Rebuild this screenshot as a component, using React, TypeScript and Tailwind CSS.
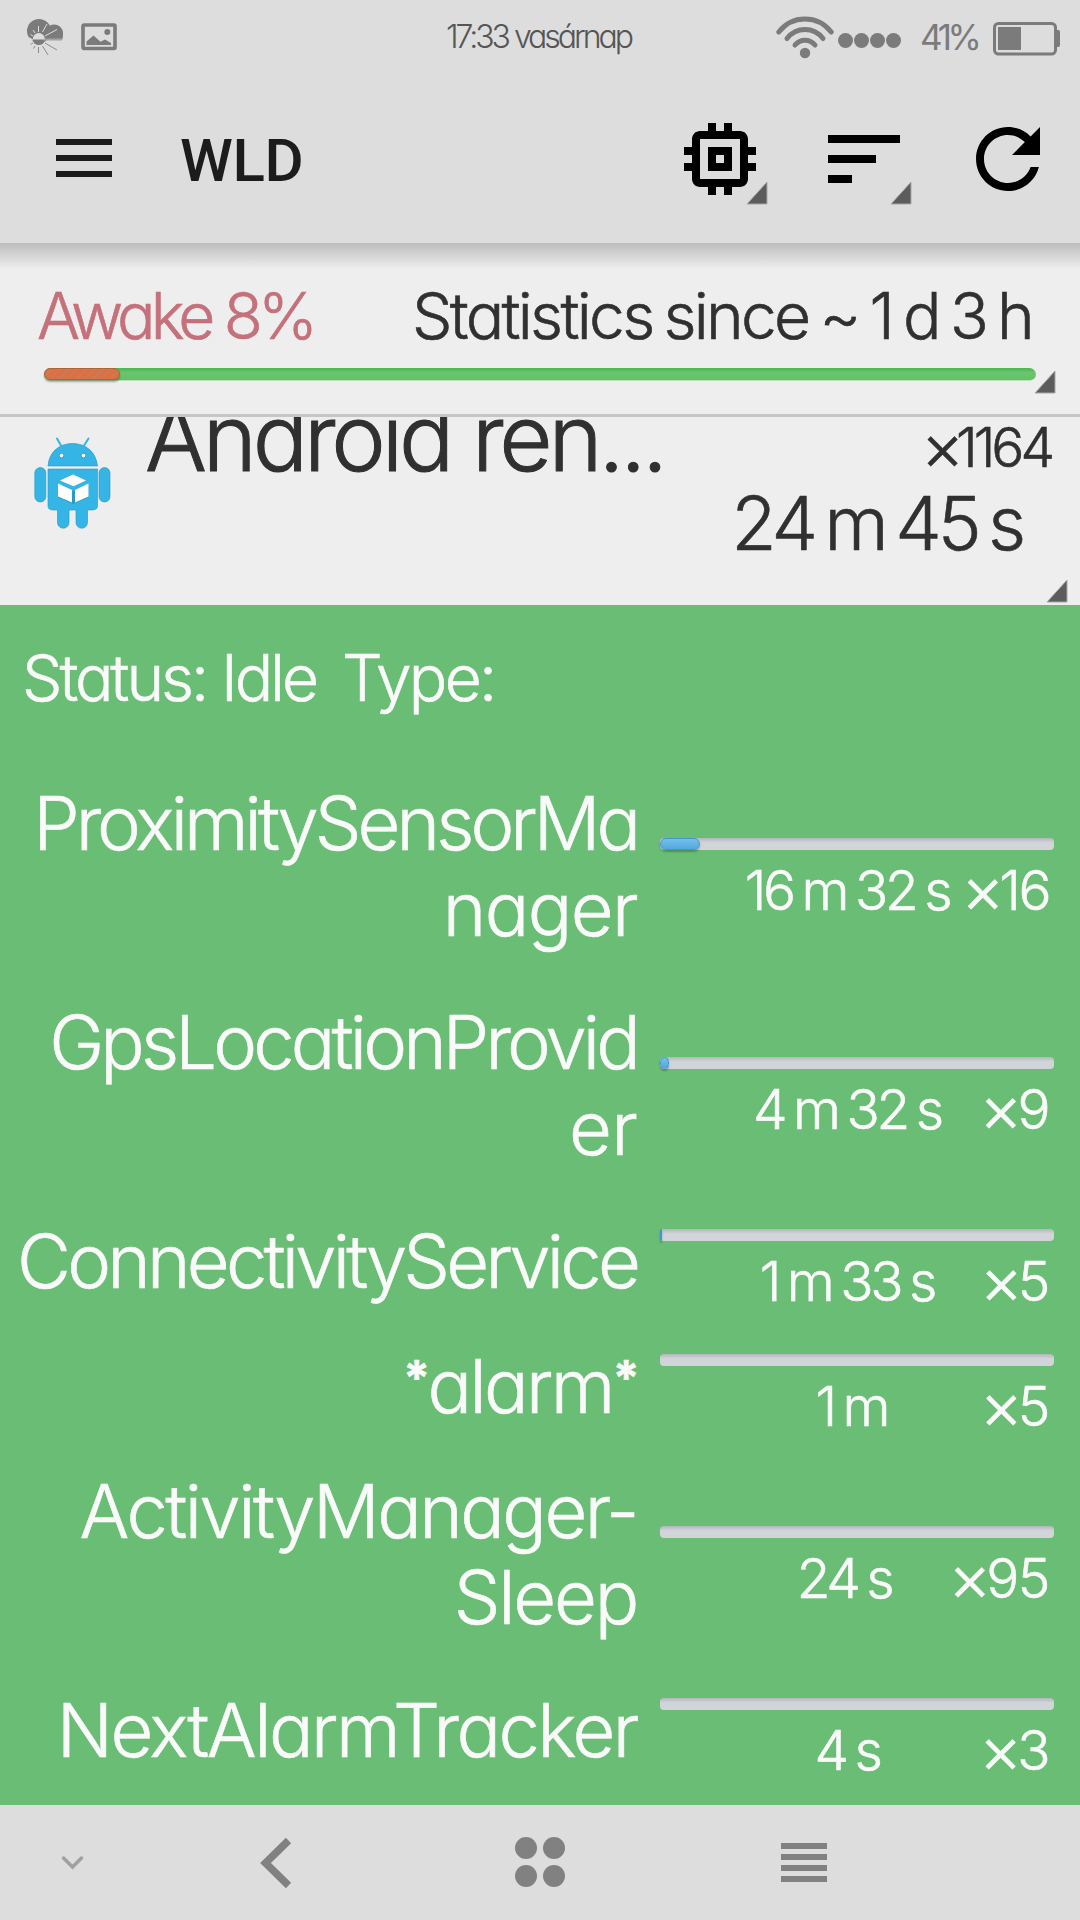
import React from 'react';

type Wakelock = {
  lines: { text: string; tracking: string; stars?: boolean }[];
  time: string;
  timeShift?: string;
  count: string;
  countTracking: string;
  fill: number;
};

const wakelocks: Wakelock[] = [
  {
    lines: [
      { text: 'ProximitySensorMa', tracking: 'tracking-[-3.95px]' },
      { text: 'nager', tracking: 'tracking-[-1.6px]' },
    ],
    time: '16 m 32 s',
    count: '16',
    countTracking: 'tracking-[-2.5px]',
    fill: 40,
  },
  {
    lines: [
      { text: 'GpsLocationProvid', tracking: 'tracking-[-3.85px]' },
      { text: 'er', tracking: 'tracking-[-0.8px]' },
    ],
    time: '4 m 32 s',
    count: '9',
    countTracking: 'tracking-[-1.5px]',
    fill: 9,
  },
  {
    lines: [{ text: 'ConnectivityService', tracking: 'tracking-[-3.78px]' }],
    time: '1 m 33 s',
    count: '5',
    countTracking: 'tracking-[-1.5px]',
    fill: 2,
  },
  {
    lines: [{ text: 'alarm', tracking: 'tracking-[-2.6px]', stars: true }],
    time: '1 m',
    timeShift: 'pl-[9px]',
    count: '5',
    countTracking: 'tracking-[-1.5px]',
    fill: 0,
  },
  {
    lines: [
      { text: 'ActivityManager-', tracking: 'tracking-[-2.5px]' },
      { text: 'Sleep', tracking: 'tracking-[-2.2px]' },
    ],
    time: '24 s',
    count: '95',
    countTracking: 'tracking-[-1.5px]',
    fill: 0,
  },
  {
    lines: [{ text: 'NextAlarmTracker', tracking: 'tracking-[-2.45px]' }],
    time: '4 s',
    count: '3',
    countTracking: 'tracking-[-1.5px]',
    fill: 0,
  },
];

function Corner({ className = '' }: { className?: string }) {
  return (
    <svg className={`absolute h-6 w-[22px] ${className}`} viewBox="0 0 22 24">
      <path d="M21 1V23H1Z" fill="#5c5c5c" stroke="#a8a8a8" strokeWidth="1" />
    </svg>
  );
}

function WeatherIcon() {
  return (
    <svg className="h-[37px] w-9" viewBox="0 0 36 37">
      <g fill="#7b7b7b">
        <circle cx="12" cy="12" r="12" />
        <path d="M14 21V13L20 9A9 9 0 0 1 36 16Q36 19 35 21Z" />
      </g>
      <rect x="15" y="19.5" width="20" height="2" fill="#a3a3a3" />
      <circle cx="11.8" cy="20" r="6" fill="#dddddd" />
      <path d="M0 17L6 20.500L4 26H0Z" fill="#dddddd" />
      <path d="M5.8 20.5H17.8A6 5.5 0 0 1 5.8 20.5Z" fill="#7b7b7b" />
      <path d="M11.5 13V7M15.5 13L20 5M18 17L30 10.500M8 14L6 11M6 17L3.500 15.500" stroke="#dddddd" strokeWidth="1" />
      <path d="M11.5 28V34M15.500 27L21 36M18 24L30 31M8 27L6.500 29.500M6 24L3.500 25.500" stroke="#8c8c8c" strokeWidth="1" />
    </svg>
  );
}

function PictureIcon() {
  return (
    <svg className="h-7 w-9" viewBox="0 0 36 28">
      <rect x="2" y="2" width="32" height="23.500" rx="1" fill="none" stroke="#7b7b7b" strokeWidth="3.600" />
      <circle cx="26.300" cy="9" r="3" fill="#7b7b7b" />
      <path d="M5.500 22V18.500L12.500 12.500L19.500 18.800L24 16.500L30 20V22Z" fill="#7b7b7b" />
    </svg>
  );
}

function StatusBar() {
  return (
    <header className="flex h-[74px] items-center text-[#7b7b7b]">
      <div className="flex w-[360px] items-center gap-[18px] pl-[27px]">
        <WeatherIcon />
        <PictureIcon />
      </div>
      <div className="w-[360px] whitespace-nowrap pr-[3px] text-center text-[32px] leading-[74px] tracking-[-3.03px] text-[#555555]">
        17:33 vasárnap
      </div>
      <div className="flex w-[360px] items-center pl-[56px]">
        <svg className="h-[43px] w-[58px]" viewBox="0 0 58 43">
          <g fill="none" stroke="#7b7b7b" strokeWidth="5" strokeLinecap="round">
            <path d="M2.800 16Q13 3 29 3T55.200 16" />
            <path d="M11 22.500Q18 13.500 29 13.500T47 22.500" />
            <path d="M19 29Q23 24.200 29 24.200T39 29" />
          </g>
          <circle cx="29" cy="37" r="5.200" fill="#7b7b7b" />
        </svg>
        <div className="ml-1 mt-[6px] flex">
          {[0, 1, 2, 3].map((i) => (
            <span key={i} className="mr-px size-[15px] rounded-full bg-[#7b7b7b]" />
          ))}
        </div>
        <span className="ml-[18px] w-[55px] whitespace-nowrap text-[35px] font-normal leading-[74px] tracking-[-4.3px]">41%</span>
        <svg className="ml-[18px] mt-[3px] h-[34px] w-[68px]" viewBox="0 0 68 34">
          <rect x="1.500" y="1.500" width="61" height="30.500" rx="4" fill="none" stroke="#7b7b7b" strokeWidth="3" />
          <rect x="5" y="5" width="23" height="23" fill="#7b7b7b" />
          <path d="M63 8H65.500Q67 8 67 10V23Q67 25 65.500 25H63Z" fill="#7b7b7b" />
        </svg>
      </div>
    </header>
  );
}

function Toolbar() {
  return (
    <div className="flex h-[169px] items-center">
      <div className="mb-[2px] ml-14 flex w-14 flex-col gap-[10px]">
        <span className="h-[6px] bg-[#1c1c1c]" />
        <span className="h-[6px] bg-[#1c1c1c]" />
        <span className="h-[6px] bg-[#1c1c1c]" />
      </div>
      <h1 className="ml-[68px] pt-[5px] font-[Roboto,sans-serif] text-[60px] font-medium leading-[60px] tracking-[-0.4px] text-[#1c1c1c]">
        WLD
      </h1>
      <div className="ml-auto mr-6 flex gap-12">
        <div className="relative">
          <svg className="size-24" viewBox="0 0 24 24">
            <path d="M15 9H9v6h6V9zm-2 4h-2v-2h2v2zm8-2V9h-2V7c0-1.100-.9-2-2-2h-2V3h-2v2h-2V3H9v2H7c-1.100 0-2 .9-2 2v2H3v2h2v2H3v2h2v2c0 1.100.9 2 2 2h2v2h2v-2h2v2h2v-2h2c1.100 0 2-.9 2-2v-2h2v-2h-2v-2h2zm-4 6H7V7h10v10z" />
          </svg>
          <Corner className="bottom-[2px] right-0" />
        </div>
        <div className="relative">
          <svg className="size-24" viewBox="0 0 24 24">
            <path d="M3 18h6v-2H3v2zM3 6v2h18V6H3zm0 7h12v-2H3v2z" />
          </svg>
          <Corner className="bottom-[2px] right-0" />
        </div>
        <svg className="size-24" viewBox="0 0 24 24">
          <path d="M17.650 6.350C16.200 4.900 14.210 4 12 4c-4.420 0-7.990 3.580-7.990 8s3.570 8 7.990 8c3.730 0 6.840-2.550 7.730-6h-2.080c-.82 2.330-3.040 4-5.650 4-3.310 0-6-2.690-6-6s2.690-6 6-6c1.660 0 3.140.69 4.220 1.780L13 11h7V4l-2.350 2.350z" />
        </svg>
      </div>
    </div>
  );
}

function Summary() {
  return (
    <section className="relative h-[174px] border-b-[3px] border-[#c6c6c6] bg-gradient-to-b from-[#bdbdbd] via-[#eeeeee] via-[26px] to-[#eeeeee] pt-[43px]">
      <div className="flex justify-between whitespace-nowrap pl-[37px] pr-[48px] text-[64px] leading-[60px]">
        <span className="tracking-[-4.84px] text-[#c4717b]">Awake 8%</span>
        <span className="tracking-[-2.7px] [word-spacing:-4.3px]">Statistics since ~ 1 d 3 h</span>
      </div>
      <div className="ml-11 mt-[22px] h-[13px] w-[992px] rounded-full border-b border-[#b9dfb9] bg-gradient-to-b from-[#4cb64e] via-[#69c56f] via-40% to-[#66c068]">
        <div className="h-3 w-[76px] rounded-full border-[1.5px] border-[#b0623a] bg-[repeating-linear-gradient(135deg,#dc7040_0px,#dc7040_4px,#c67c5c_4px,#c67c5c_6px)] shadow-[0_2px_2px_rgba(0,0,0,0.3)]" />
      </div>
      <Corner className="right-6 top-[127px]" />
    </section>
  );
}

function AndroidIcon() {
  return (
    <svg className="h-[94px] w-[78px]" viewBox="0 0 78 94">
      <g fill="#35b5e5" stroke="#2593bf" strokeWidth="0.600">
        <path d="M14 29C15 15 25 6.500 38.500 6.500S62 15 63.500 29Z" />
        <path d="M14 32H63.500V69Q63.500 73 58 73H53.500V85.500A5.500 5.500 0 0 1 42 85.500V73H35V85.500A5.500 5.500 0 0 1 23.500 85.500V73H19Q14 73 14 69Z" />
        <rect x="0.800" y="30.500" width="11" height="34.500" rx="5.500" />
        <rect x="65" y="30.500" width="11" height="34.500" rx="5.500" />
      </g>
      <path d="M23 1.500L27 8.500M54.500 1.500L50 8.500" stroke="#35b5e5" strokeWidth="2" strokeLinecap="round" />
      <circle cx="27.500" cy="18.500" r="2.300" fill="#f5f5f5" stroke="#258db8" strokeWidth="0.700" />
      <circle cx="49.500" cy="18.500" r="2.300" fill="#f5f5f5" stroke="#258db8" strokeWidth="0.700" />
      <path d="M24 48L39 54L54.500 48V60.500L39 67L24 60.500Z" fill="#207fa6" opacity="0.500" />
      <path d="M39 37.500L52 43.500L39.500 49.200L26 43.500Z" fill="#fff" />
      <path d="M24 46.500L38 53V65.500L24 59.500Z" fill="#fff" />
      <path d="M54.500 46.500L41 53V65.500L54.500 59.500Z" fill="#fff" />
    </svg>
  );
}

function AppRow() {
  return (
    <section className="relative flex h-[188px] overflow-hidden bg-[#eeeeee]">
      <div className="pl-[34px] pt-5">
        <AndroidIcon />
      </div>
      <div className="-mt-[25px] ml-[33px] whitespace-nowrap text-[92px] leading-[92px] tracking-[-4.17px] [-webkit-text-stroke:1px_currentColor]">
        Android ren...
      </div>
      <div className="ml-auto flex flex-col items-end whitespace-nowrap">
        <span className="mr-[29px] h-[60px] text-[55px] leading-[60px] tracking-[-4px]">
          <span className="relative top-[3px] text-[66px] leading-[0px] tracking-[-8px]">×</span>1164
        </span>
        <span className="mr-[58px] mt-[6px] text-[74px] leading-[80px] tracking-[-4.2px] [word-spacing:-6px]">24 m 45 s</span>
      </div>
      <Corner className="bottom-[2px] right-3" />
    </section>
  );
}

function Star() {
  return <span className="relative -top-[18px] text-[48px] font-bold leading-none">*</span>;
}

function WakelockRow({ item }: { item: Wakelock }) {
  return (
    <div className={`flex ${item.lines.length === 2 ? 'h-[219px]' : 'h-[125px]'}`}>
      <div className="w-[637px] pt-[18px] text-right text-[74px] leading-[86px]">
        {item.lines.map((line) => (
          <div key={line.text} className={`whitespace-nowrap ${line.tracking}`}>
            {line.stars && <Star />}
            {line.text}
            {line.stars && <Star />}
          </div>
        ))}
      </div>
      <div className="ml-[23px] h-[67px] w-[394px] self-center">
        <div className="h-3 rounded-[4px] bg-gradient-to-b from-[#b3b6bb] via-[#d1d5da] via-40% to-[#d1d5da]">
          {item.fill > 0 && (
            <div
              className="h-3 rounded-full border border-[#4198d0] bg-gradient-to-b from-[#76bfe8] to-[#4fa9dd] shadow-[0_2px_2px_rgba(0,0,0,0.25)]"
              style={{ width: item.fill }}
            />
          )}
        </div>
        <div className="mt-[10px] flex whitespace-nowrap pl-[80px] pr-[5px] text-[55px] leading-[60px]">
          <span className={`flex w-[214px] justify-center tracking-[-3.2px] [word-spacing:-3.7px] ${item.timeShift ?? ''}`}>
            {item.time}
          </span>
          <span className={`flex-1 text-right ${item.countTracking}`}>
            <span className="relative top-[3px] text-[66px] leading-[0px] tracking-[-5px]">×</span>
            {item.count}
          </span>
        </div>
      </div>
    </div>
  );
}

function NavBar() {
  return (
    <nav className="flex h-[115px] shrink-0 items-center bg-[#dddddd]">
      <svg className="ml-[61px] h-4 w-[23px]" viewBox="0 0 23 16">
        <path d="M2.500 3L11.500 12L20.500 3" fill="none" stroke="#a0a0a0" strokeWidth="3.500" strokeLinecap="round" />
      </svg>
      <svg className="ml-[176px] h-[52px] w-8" viewBox="0 0 32 52">
        <path d="M28.500 3.500L5.500 26L28.500 48.500" fill="none" stroke="#818181" strokeWidth="7.500" />
      </svg>
      <div className="mb-px ml-[223px] grid grid-cols-2 gap-x-[6px] gap-y-[6px]">
        {[0, 1, 2, 3].map((i) => (
          <span key={i} className="size-[22px] rounded-full bg-[#818181]" />
        ))}
      </div>
      <div className="ml-[216px] flex w-[46px] flex-col gap-[5px]">
        {[0, 1, 2, 3].map((i) => (
          <span key={i} className="h-[6px] bg-[#818181]" />
        ))}
      </div>
    </nav>
  );
}

export default function App() {
  return (
    <div className="flex h-[1920px] w-[1080px] flex-col overflow-hidden bg-[#dddddd] font-[Inter,sans-serif] font-light text-[#303030] [font-feature-settings:'cv11']">
      <StatusBar />
      <Toolbar />
      <div className="[-webkit-text-stroke:0.6px_currentColor]">
        <Summary />
        <AppRow />
        <main className="h-[1200px] overflow-hidden bg-[#6abd75] text-[#fafafa]">
          <div className="flex gap-[26px] whitespace-nowrap pl-[22px] pt-[43px] text-[64px] leading-[60px]">
            <span className="tracking-[-3.06px]">Status: Idle</span>
            <span className="tracking-[-2.73px]">Type:</span>
          </div>
          <div className="mt-[54px]">
            {wakelocks.map((item) => (
              <WakelockRow key={item.lines[0].text} item={item} />
            ))}
          </div>
        </main>
      </div>
      <NavBar />
    </div>
  );
}
